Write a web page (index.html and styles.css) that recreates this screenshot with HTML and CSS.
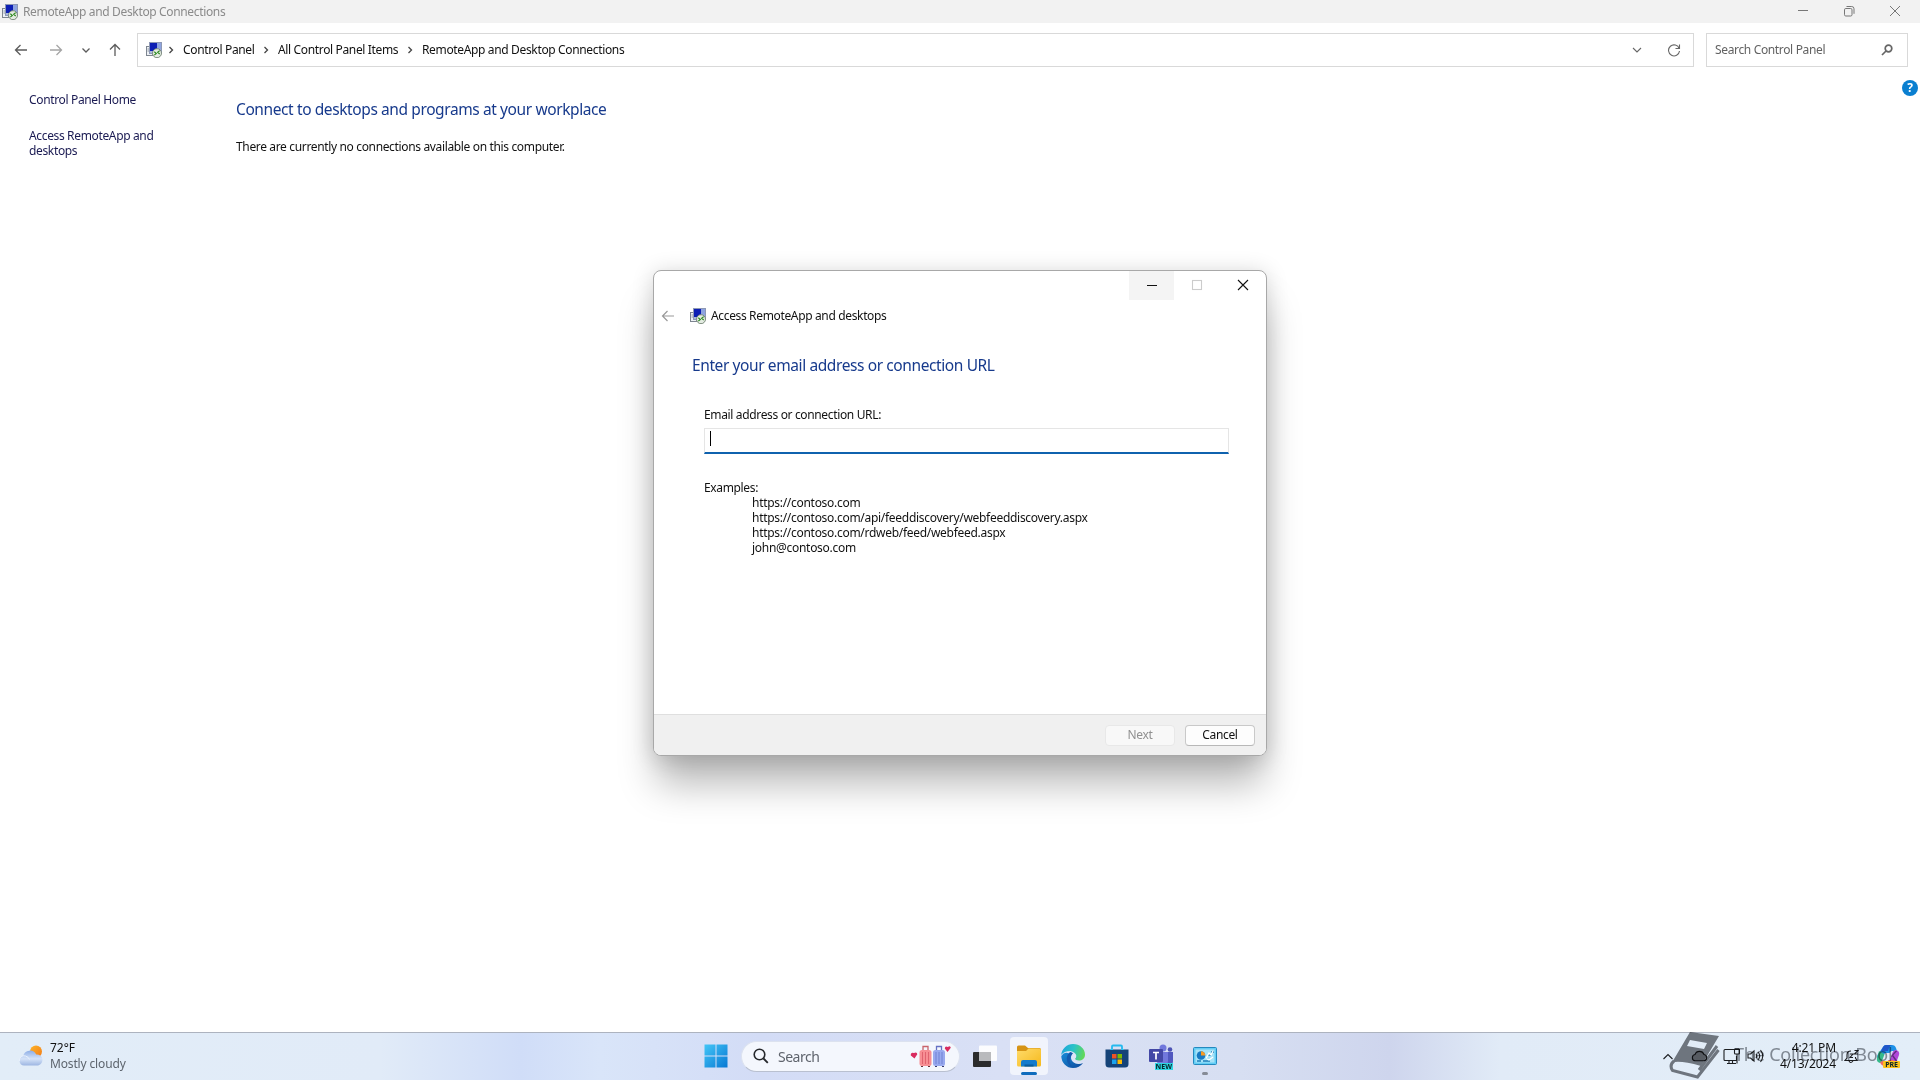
FILE: index.html
```html
<!DOCTYPE html>
<html lang="en">

<head>
    <meta charset="UTF-8">
    <meta name="viewport" content="width=device-width, initial-scale=1.0">
    <title>RemoteApp and Desktop Connections</title>
    <link rel="stylesheet" href="styles.css">
</head>

<body>
    <!-- Shared icon, used in the title bar, address bar and dialog -->
    <svg class="defs" width="0" height="0">
        <symbol id="remoteIcon" viewBox="0 0 16 16">
            <rect x=".5" y="4.5" width="6" height="9" fill="#eef1f5" stroke="#7d8590" />
            <path d="M1.5 7h2M1.5 9h2" stroke="#8c96a3" />
            <rect x="3.5" y=".5" width="12" height="11" fill="#a9b8dc" stroke="#8d98b5" />
            <path d="M4 1h7v6l-3 2H4z" fill="#0d1fb4" />
            <path d="M11 1h4v7l-4-2z" fill="#8ea4e0" />
            <circle cx="11" cy="11.2" r="4.5" fill="#e4ebe2" stroke="#7b8b7c" />
            <path d="M8.3 9.7l2 1.7-2 1.7M13.7 8.6l-2 1.7 2 1.7" fill="none" stroke="#2c8a1e" stroke-width="1.2" />
        </symbol>
    </svg>

    <!-- Main window -->
    <div class="window">
        <div class="title-bar">
            <svg class="app-icon" width="16" height="16"><use href="#remoteIcon" /></svg>
            <span class="title">RemoteApp and Desktop Connections</span>
            <div class="window-buttons">
                <svg width="12" height="12" viewBox="0 0 12 12"><path d="M1 5.5h10" /></svg>
                <svg width="12" height="12" viewBox="0 0 12 12"><rect x="1.5" y="3.5" width="7.5" height="7.5" rx="1.3" /><path d="M3.5 1.5h5.2q2.3 0 2.3 2.3v5" /></svg>
                <svg width="12" height="12" viewBox="0 0 12 12"><path d="M1 1l10 10M11 1L1 11" /></svg>
            </div>
        </div>

        <div class="nav-bar">
            <div class="nav-buttons">
                <svg width="14" height="14" viewBox="0 0 14 14"><path d="M13 7H1.5M6.5 2l-5 5 5 5" /></svg>
                <svg class="disabled" width="14" height="14" viewBox="0 0 14 14"><path d="M1 7h11.5M7.500 2l5 5-5 5" /></svg>
                <svg width="14" height="14" viewBox="0 0 14 14"><path d="M3.500 5.500L7 9l3.500-3.500" /></svg>
                <svg width="14" height="14" viewBox="0 0 14 14"><path d="M7 13V1.500M2 6.500l5-5 5 5" /></svg>
            </div>
            <div class="address-box">
                <svg width="16" height="16"><use href="#remoteIcon" /></svg>
                <svg class="crumb-arrow" width="6" height="8" viewBox="0 0 6 8"><path d="M1.500 1l3 3-3 3" /></svg>
                <span class="crumb crumb-panel">Control Panel</span>
                <svg class="crumb-arrow" width="6" height="8" viewBox="0 0 6 8"><path d="M1.500 1l3 3-3 3" /></svg>
                <span class="crumb crumb-items">All Control Panel Items</span>
                <svg class="crumb-arrow" width="6" height="8" viewBox="0 0 6 8"><path d="M1.500 1l3 3-3 3" /></svg>
                <span class="crumb">RemoteApp and Desktop Connections</span>
                <div class="address-tools">
                    <svg width="10" height="10" viewBox="0 0 10 10"><path d="M1 3l4 4 4-4" /></svg>
                    <svg width="14" height="14" viewBox="0 0 14 14"><path d="M12.200 5.500A5.500 5.500 0 1 0 12.500 8M12.500 1.500v4H8.500" /></svg>
                </div>
            </div>
            <div class="search-box">
                <span>Search Control Panel</span>
                <svg width="12" height="12" viewBox="0 0 12 12"><circle cx="7.500" cy="4.500" r="3.300" /><path d="M5 7L1 11" /></svg>
            </div>
        </div>

        <div class="content">
            <div class="sidebar">
                <a class="home-link">Control Panel Home</a>
                <a class="task-link">Access RemoteApp and desktops</a>
            </div>
            <div class="main">
                <h1>Connect to desktops and programs at your workplace</h1>
                <p>There are currently no connections available on this computer.</p>
            </div>
            <div class="help">?</div>
        </div>
    </div>

    <!-- Connection wizard -->
    <div class="dialog">
        <div class="dialog-buttons">
            <div class="dialog-button hover"><svg width="12" height="12" viewBox="0 0 12 12"><path d="M1 6.500h10" /></svg></div>
            <div class="dialog-button off"><svg width="12" height="12" viewBox="0 0 12 12"><rect x="1.500" y="1.500" width="9" height="9" /></svg></div>
            <div class="dialog-button"><svg width="12" height="12" viewBox="0 0 12 12"><path d="M1 1l10 10M11 1L1 11" /></svg></div>
        </div>
        <div class="dialog-title">
            <svg class="back" width="14" height="12" viewBox="0 0 14 12"><path d="M13 6H1.500M6.500 1l-5 5 5 5" /></svg>
            <svg width="16" height="16"><use href="#remoteIcon" /></svg>
            <span>Access RemoteApp and desktops</span>
        </div>
        <div class="dialog-body">
            <h2>Enter your email address or connection URL</h2>
            <div class="form">
                <label>Email address or connection URL:</label>
                <div class="input"><div class="caret"></div></div>
                <div class="examples-label">Examples:</div>
                <div class="examples">
                    <div>https://contoso.com</div>
                    <div>https://contoso.com/api/feeddiscovery/webfeeddiscovery.aspx</div>
                    <div>https://contoso.com/rdweb/feed/webfeed.aspx</div>
                    <div>john@contoso.com</div>
                </div>
            </div>
        </div>
        <div class="dialog-footer">
            <div class="btn btn-disabled">Next</div>
            <div class="btn">Cancel</div>
        </div>
    </div>

    <!-- Taskbar -->
    <div class="taskbar">
        <div class="weather">
            <svg width="26" height="22" viewBox="0 0 26 22">
                <defs>
                    <linearGradient id="sun" x1="0" y1="0" x2="1" y2="1"><stop offset="0" stop-color="#fdb52a" /><stop offset="1" stop-color="#f27a17" /></linearGradient>
                    <linearGradient id="cloud" x1="0" y1="0" x2="0" y2="1"><stop offset="0" stop-color="#8eaee6" /><stop offset=".55" stop-color="#d5e3f8" /><stop offset="1" stop-color="#9db6e2" /></linearGradient>
                </defs>
                <circle cx="18" cy="6.500" r="6" fill="url(#sun)" />
                <path d="M6 20.500a5 5 0 0 1-.8-9.800 7 7 0 0 1 13-1.200 5.600 5.600 0 0 1 2 11z" fill="url(#cloud)" />
                <path d="M1.500 16a4.500 4.500 0 0 1 6-5q3 .8 4 3.500" fill="none" stroke="#e9f1fd" />
            </svg>
            <div class="weather-text">
                <div>72°F</div>
                <div class="sky">Mostly cloudy</div>
            </div>
        </div>

        <div class="apps">
            <svg class="start" width="24" height="24" viewBox="0 0 24 24">
                <defs><linearGradient id="win" x1="0" y1="0" x2="1" y2="1"><stop offset="0" stop-color="#43c6f7" /><stop offset="1" stop-color="#0878d3" /></linearGradient></defs>
                <path d="M.5.500h11v11H.5zM12.500.500h11v11h-11zM.5 12.500h11v11H.5zM12.500 12.500h11v11h-11z" fill="url(#win)" />
            </svg>
            <div class="task-search">
                <svg width="16" height="16" viewBox="0 0 16 16"><circle cx="6.500" cy="6.500" r="5.300" fill="none" stroke="#26282c" stroke-width="1.600" /><path d="M10.500 10.500l4.300 4.300" stroke="#26282c" stroke-width="1.800" /></svg>
                <span>Search</span>
                <svg class="luggage" width="42" height="24" viewBox="0 0 42 24">
                    <path d="M4.500 14.500L.8 11.500Q.5 8 4 9q3-1.500 3.300 1.300z" fill="#d92c5f" />
                    <path d="M13 7V2.500h5V7" fill="none" stroke="#c9646c" stroke-width="1.300" />
                    <rect x="9.500" y="6" width="12" height="16" rx="2.500" fill="#f78e93" />
                    <path d="M12.500 8v12M15.500 8v12M18.500 8v12" stroke="#e0636f" />
                    <path d="M12 22v1M19 22v1" stroke="#62323c" stroke-width="2" />
                    <path d="M26.500 7V2.500h5V7" fill="none" stroke="#6571c4" stroke-width="1.300" />
                    <rect x="23" y="6" width="12" height="16" rx="2.500" fill="#98a9ef" />
                    <path d="M26 8v12M29 8v12M32 8v12" stroke="#7182d3" />
                    <path d="M26 22v1M33 22v1" stroke="#3b3d6b" stroke-width="2" />
                    <path d="M37.500 8L34.800 4.500Q35 1.500 37.800 3q2.500-2 3 .7z" fill="#d92c5f" />
                </svg>
            </div>
            <div class="app">
                <svg width="24" height="24" viewBox="0 0 24 24">
                    <rect x="0" y="8" width="18" height="15" rx="1" fill="#2b2b2c" />
                    <rect x="6" y="1.500" width="18" height="15.500" rx="1" fill="#fff" fill-opacity=".9" />
                    <path d="M6 8h12v9H6z" fill="#b9babd" />
                </svg>
            </div>
            <div class="app active">
                <svg width="24" height="24" viewBox="0 0 24 24">
                    <defs><linearGradient id="folder" x1="0" y1="0" x2="1" y2="1"><stop offset="0" stop-color="#ffdb6b" /><stop offset="1" stop-color="#f5b91c" /></linearGradient></defs>
                    <path d="M0 3q0-1.500 1.500-1.500H8L11 4h11.500Q24 4 24 5.500V12H0z" fill="#d69415" />
                    <path d="M0 7h9l2.500-2.500h11Q24 4.500 24 6v15q0 1.500-1.500 1.500h-21Q0 22.500 0 21z" fill="url(#folder)" />
                    <path d="M4 22.500V18q0-2 2-2h12q2 0 2 2v4.500z" fill="#137bcc" />
                    <path d="M7.500 22.500V20.500h9v2z" fill="#075c9f" />
                </svg>
                <i class="indicator"></i>
            </div>
            <div class="app">
                <svg width="24" height="24" viewBox="0 0 24 24">
                    <defs>
                        <linearGradient id="edgeTop" x1="0" y1=".3" x2="1" y2=".5"><stop offset="0" stop-color="#1ca5dc" /><stop offset=".5" stop-color="#2bc3c6" /><stop offset="1" stop-color="#62d957" /></linearGradient>
                        <linearGradient id="edgeLow" x1="0" y1="0" x2="1" y2="1"><stop offset="0" stop-color="#168bd8" /><stop offset="1" stop-color="#0f4b9c" /></linearGradient>
                    </defs>
                    <path d="M.3 12A12 12 0 0 0 12 24q6.500 0 10-5-6 2.500-10-1-3-3-1.500-7Q4 6 .3 12z" fill="url(#edgeLow)" />
                    <path d="M.2 11A11.900 11.900 0 0 1 12 0c7 0 12 5 12 10.500 0 4-3 6-6 6q-3.500 0-4-1.700c0-.8 1.400-1.100 1.200-3.300Q14.500 8 9.500 7 3 7 .2 11z" fill="url(#edgeTop)" />
                    <path d="M9 8Q2.500 14 8.500 21.500q2 2 5 2.300-6-3.800-4.500-9.300Q10 11 12 9.500 11 8 9 8z" fill="#125aae" />
                    <path d="M12.300 9.500Q9.500 12 11 15.800 13.500 20 19 19.500q3-.5 3.500-1.600-3.500 1.100-6.300-.2-2.700-1.200-2.200-3 1.400-1.100 1.200-3.200-1-1.900-2.900-2z" fill="#dce5f7" />
                </svg>
            </div>
            <div class="app">
                <svg width="24" height="24" viewBox="0 0 24 24">
                    <path d="M7 7V2.500Q7 1.500 8 1.500h8q1 0 1 1V7" fill="none" stroke="#25b9ee" stroke-width="1.800" />
                    <path d="M.5 5.500h23V20q0 3.500-3.500 3.500H4Q.5 23.500.5 20z" fill="#154378" />
                    <path d="M5 5.500h3M16 5.500h3" stroke="#2fc5f3" />
                    <path d="M7 10h4.500v4.500H7z" fill="#f05125" /><path d="M12.500 10H17v4.500h-4.500z" fill="#7eba00" />
                    <path d="M7 15.500h4.500V20H7z" fill="#1ca3ec" /><path d="M12.500 15.500H17V20h-4.500z" fill="#fdb900" />
                </svg>
            </div>
            <div class="app teams">
                <svg width="24" height="24" viewBox="0 0 24 24">
                    <circle cx="14" cy="4" r="3.500" fill="#7178dc" /><circle cx="21" cy="5.500" r="2.300" fill="#4c52b4" />
                    <path d="M16 8h8v9q0 4-4 4h-4z" fill="#5158bf" /><path d="M8 8h11v9q0 5-5.500 5T8 17z" fill="#7178dc" />
                    <rect x="0" y="5" width="14" height="13" rx="1" fill="#4348a6" />
                    <path d="M4 8.500h6M7 8.500v7" stroke="#fff" stroke-width="1.700" />
                </svg>
                <b class="new-badge">NEW</b>
            </div>
            <div class="app">
                <svg width="24" height="24" viewBox="0 0 24 24">
                    <rect x=".5" y="3.500" width="23" height="17" rx="1" fill="#62cdf5" stroke="#2489bf" />
                    <rect x="2.500" y="5.500" width="19" height="13" fill="#a5e2f8" />
                    <circle cx="8" cy="11.500" r="4.300" fill="#1679c3" /><path d="M8 11.500V7.200a4.300 4.300 0 0 1 4.300 4.300z" fill="#f79a22" />
                    <path d="M18 8h3M15 11h3M4 17h4M10 17h7" stroke="#1c7fba" stroke-width="1.300" />
                    <path d="M13 14.500l3-5.500 2 2 2-4M14 15l2 1 4-3" fill="none" stroke="#fff" stroke-width="1.300" />
                </svg>
                <i class="indicator idle"></i>
            </div>
        </div>

        <div class="tray">
            <svg width="10" height="7" viewBox="0 0 10 7"><path d="M.5 6L5 1.500 9.500 6" /></svg>
            <svg class="onedrive" width="17" height="12" viewBox="0 0 17 12"><path d="M4 10.800a3.200 3.200 0 0 1 0-6.300 4.800 4.800 0 0 1 9 0 3.200 3.200 0 0 1 0 6.300z" /></svg>
            <svg class="network" width="17" height="17" viewBox="0 0 17 17"><path d="M11 1.500H2q-1 0-1 1v9q0 1 1 1h11.500V8M4 15.500h9M6 12.500v3M9.500 12.500v3M11.500 1.500h5V5q0 1-1 1h-3q-1 0-1-1zM14 6v9.500M13 0v2M15 0v2" /></svg>
            <svg class="sound" width="17" height="14" viewBox="0 0 17 14"><path d="M1 5h2.500L7 2v10L3.500 9H1zM9 5q1.500 2 0 4M11 3q3.500 4 0 8M13.500 1q4.500 6 0 12" /></svg>
            <div class="clock">
                <div>4:21 PM</div>
                <div>4/13/2024</div>
            </div>
            <svg class="bell" width="15" height="15" viewBox="0 0 15 15"><path d="M7 2Q3 2 3 6v3L1 11.500h12L11.500 9V8M5 12q1.500 3 4 0M6 5h3L6 8.500h3M10.500 1.500H14L10.500 5H14" /></svg>
            <div class="copilot">
                <svg width="24" height="22" viewBox="0 0 24 22">
                    <path d="M7 2q1-2 3-2h6q3 0 4 3l1 3h-5q-2 0-3 3l-2 6H3Q0 14 1.500 10z" fill="#1e91e8" />
                    <path d="M3 6L1 13q-1 4 3 5h6l3-9H8z" fill="#36b98a" />
                    <path d="M20 5q4 1 3 5l-3 8q-1 3-4 3h-4l4-12q1-4 4-4z" fill="#b148d9" />
                    <path d="M9 15h9l-2 6H9q-4 0-5-4z" fill="#f26d63" />
                    <path d="M7 2q1-2 3-2h6q-2 0-3 3l-1 3H5z" fill="#1f56c9" />
                    <path d="M9 8h6l-3 8H6z" fill="#e3edf8" />
                </svg>
                <b class="pre-badge">PRE</b>
            </div>
        </div>

        <!-- Logo stamp over the tray -->
        <div class="stamp">
            <svg width="52" height="48" viewBox="0 0 52 48">
                <path fill-rule="evenodd" d="M21 0L50 4 32 34Q14 29 6 30 3 30 1.500 33zM21 8l17 3-3 6-17-3z" fill="#7c7e82" />
                <path d="M5 29Q0 33 3.500 38.500l25 6.500 21-27M30 38L48 14" fill="none" stroke="#7c7e82" stroke-width="3" />
            </svg>
            <span>The Collection Book</span>
        </div>
    </div>
</body>

</html>
```

FILE: styles.css
```css
/* Page basics */
body {
    margin: 0;
    width: 1920px;
    height: 1080px;
    overflow: hidden;
    display: flex;
    flex-direction: column;
    background-color: #ffffff;
    color: #111111;
    font-family: "Noto Sans", "Open Sans", sans-serif;
    font-size: 12px;
    line-height: 15px;
    letter-spacing: -0.35px;
    white-space: nowrap;
}

svg {
    display: block;
    flex: none;
}

.defs {
    position: absolute;
}

.window {
    flex: 1;
}

/* Title bar */
.title-bar {
    display: flex;
    align-items: center;
    height: 23px;
    padding-left: 2px;
    background-color: #f2f2f2;
    color: #8a8a8a;
}

.title {
    margin-left: 5px;
    flex: 1;
}

.window-buttons {
    display: flex;
    gap: 34px;
    padding: 0 19px 2px 0;
}

.window-buttons svg {
    fill: none;
    stroke: #777777;
}

/* Navigation row */
.nav-bar {
    display: flex;
    align-items: center;
    height: 34px;
    padding: 10px 12px 10px 14px;
}

.nav-buttons {
    display: flex;
    width: 123px;
}

.nav-buttons svg {
    fill: none;
    stroke: #5c5c5c;
    stroke-width: 1.3;
    margin-right: 21px;
}

.nav-buttons svg:nth-child(2) {
    margin-right: 16px;
}

.nav-buttons svg:nth-child(3) {
    margin-right: 15px;
}

.nav-buttons svg:last-child {
    margin-right: 0;
}

.nav-buttons .disabled {
    stroke: #a5a5a5;
}

.address-box {
    box-sizing: border-box;
    display: flex;
    align-items: center;
    width: 1557px;
    height: 34px;
    padding-left: 8px;
    border: 1px solid #d9d9d9;
}

.crumb,
.search-box span {
    padding-bottom: 1px;
}

.crumb-arrow {
    fill: none;
    stroke: #444444;
    stroke-width: 1.3;
    margin: 0 9px 0 8px;
}

.address-box svg:first-child + .crumb-arrow {
    margin-left: 6px;
}

.crumb-panel {
    width: 72px;
}

.crumb-items {
    width: 121px;
}

.address-tools {
    display: flex;
    align-items: center;
    gap: 25px;
    margin-left: auto;
    padding-right: 12px;
}

.address-tools svg {
    fill: none;
    stroke: #666666;
    stroke-width: 1.1;
}

.search-box {
    box-sizing: border-box;
    display: flex;
    align-items: center;
    justify-content: space-between;
    flex: 1;
    height: 34px;
    margin-left: 12px;
    padding: 0 14px 0 8px;
    border: 1px solid #d9d9d9;
    color: #626262;
}

.search-box svg {
    fill: none;
    stroke: #666666;
    stroke-width: 1.7;
}

/* Window content */
.content {
    display: flex;
    align-items: flex-start;
}

.sidebar {
    width: 207px;
    padding: 15px 0 0 29px;
    color: #1a1a52;
}

.sidebar a {
    display: block;
}

.home-link {
    margin-bottom: 21px;
}

.task-link {
    width: 135px;
    white-space: normal;
}

.main {
    flex: 1;
    padding-top: 21px;
}

h1,
h2 {
    margin: 0;
    color: #173a8c;
    font-size: 15.5px;
    font-weight: normal;
    line-height: 22px;
    letter-spacing: -0.4px;
}

.main p {
    margin: 19px 0 0;
}

.help {
    width: 16px;
    height: 16px;
    margin: 3px 2px 0 0;
    border-radius: 50%;
    background-color: #0a7fd0;
    color: #ffffff;
    font-weight: bold;
    line-height: 16px;
    text-align: center;
}

/* Wizard dialog, floats over the window */
.dialog {
    position: absolute;
    left: 653px;
    top: 270px;
    box-sizing: border-box;
    display: flex;
    flex-direction: column;
    width: 614px;
    height: 486px;
    border: 1px solid #a8a8a8;
    border-radius: 8px;
    background-color: #ffffff;
    box-shadow: 0 32px 38px -4px rgba(0, 0, 0, 0.28), 0 2px 22px rgba(0, 0, 0, 0.16);
    overflow: hidden;
}

.dialog-buttons {
    display: flex;
    justify-content: flex-end;
}

.dialog-button {
    box-sizing: border-box;
    display: flex;
    align-items: center;
    justify-content: center;
    width: 46px;
    height: 29px;
    padding-bottom: 1px;
}

.dialog-button svg {
    fill: none;
    stroke: #111111;
    stroke-width: 1.1;
}

.dialog-button.hover {
    width: 45px;
    background-color: #f4f4f4;
}

.dialog-button.off svg {
    stroke: #cccccc;
}

.dialog-title {
    display: flex;
    align-items: center;
    height: 31px;
    padding-left: 7px;
}

.dialog-title .back {
    fill: none;
    stroke: #999999;
    stroke-width: 1.2;
    margin-right: 15px;
}

.dialog-title span {
    margin-left: 5px;
}

.dialog-body {
    flex: 1;
    padding: 23px 0 0 38px;
}

.form {
    padding: 31px 0 0 12px;
}

.form label {
    display: block;
}

.input {
    box-sizing: border-box;
    width: 525px;
    height: 26px;
    margin-top: 6px;
    padding: 2px 5px;
    border: 1px solid #e5e5e5;
    border-bottom: 2px solid #0f62ae;
}

.caret {
    width: 1px;
    height: 15px;
    background-color: #000000;
}

.examples-label {
    margin-top: 26px;
}

.examples {
    padding-left: 48px;
    letter-spacing: -0.29px;
}

.dialog-footer {
    display: flex;
    justify-content: flex-end;
    gap: 10px;
    height: 30px;
    padding: 10px 11px 0 0;
    border-top: 1px solid #dfdfdf;
    background-color: #f0f0f0;
}

.btn {
    box-sizing: border-box;
    width: 70px;
    height: 21px;
    border: 1px solid #c9c9c9;
    border-bottom-color: #b8b8b8;
    border-radius: 4px;
    background-color: #fdfdfd;
    line-height: 18px;
    text-align: center;
}

.btn-disabled {
    border-color: #e8e8e8;
    background-color: #f8f8f8;
    color: #909090;
}

/* Taskbar */
.taskbar {
    position: relative;
    box-sizing: border-box;
    display: flex;
    height: 48px;
    border-top: 1px solid #adb3bf;
    background: linear-gradient(90deg, #e2edf8 0, #e1ebf8 380px, #d0ddf8 520px, #d9e5f9 600px, #d3dcf6 760px, #d9e0f5 1000px, #d7dff2 1240px, #ced5ed 1390px, #e1ebf7 1500px, #e3eef8 100%);
}

.weather {
    box-sizing: border-box;
    display: flex;
    width: 704px;
    padding: 7px 0 0 18px;
    letter-spacing: 0;
}

.weather svg {
    margin: 5px 6px 0 0;
}

.weather-text {
    line-height: 16px;
}

.sky {
    color: #5d646d;
    letter-spacing: -0.15px;
}

.apps {
    display: flex;
    align-items: center;
    height: 46px;
}

.start {
    margin-right: 13px;
}

.task-search {
    box-sizing: border-box;
    display: flex;
    align-items: center;
    width: 219px;
    height: 31px;
    margin-right: 3px;
    padding: 0 7px 0 11px;
    border: 1px solid #dce2ef;
    border-bottom-color: #b9c0d0;
    border-radius: 16px;
    background-color: #f4f7fd;
    color: #5f646d;
    font-size: 14px;
    letter-spacing: -0.5px;
}

.task-search span {
    flex: 1;
    margin-left: 9px;
}

.app {
    position: relative;
    display: flex;
    align-items: center;
    justify-content: center;
    width: 38px;
    height: 38px;
    margin: 0 3px;
    border-radius: 4px;
}

.app.active {
    background-color: #f1f4fc;
}

.indicator {
    position: absolute;
    left: 11px;
    bottom: 0;
    width: 16px;
    height: 3px;
    border-radius: 2px;
    background-color: #0f6cbd;
}

.indicator.idle {
    left: 16px;
    width: 6px;
    background-color: #858b96;
}

.new-badge,
.pre-badge {
    position: absolute;
    background-color: #2fd5e2;
    color: #08242a;
    font-size: 7px;
    line-height: 7px;
    letter-spacing: 0;
}

.new-badge {
    right: 7px;
    bottom: 5px;
    padding: 0 1px;
}

/* Tray */
.tray {
    display: flex;
    align-items: center;
    height: 46px;
    margin-left: auto;
    padding-right: 20px;
}

.tray > svg {
    fill: none;
    stroke: #1c1e21;
    stroke-width: 1.1;
}

.tray .onedrive {
    margin-left: 18px;
    fill: rgba(90, 90, 90, 0.35);
}

.tray .network {
    margin-left: 15px;
}

.tray .sound {
    margin-left: 7px;
}

.clock {
    width: 72px;
    line-height: 16px;
    text-align: right;
    letter-spacing: -0.1px;
}

.tray .bell {
    margin: 0 17px 0 8px;
}

.copilot {
    position: relative;
}

.pre-badge {
    right: 0;
    bottom: -1px;
    padding: 0 2px;
    border-radius: 1px;
    background-color: #fcc21b;
}

/* Multiply keeps the tray glyphs readable under the stamp */
.stamp {
    position: absolute;
    left: 1669px;
    top: -1px;
    display: flex;
    align-items: center;
    color: #909398;
    font-size: 18px;
    mix-blend-mode: multiply;
}

.stamp span {
    margin-left: 13px;
    padding-bottom: 4px;
    letter-spacing: -0.2px;
}
```
